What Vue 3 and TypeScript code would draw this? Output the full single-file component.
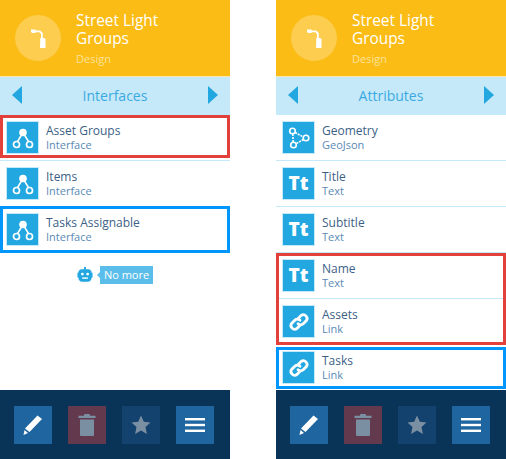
<template>
  <div class="screens">
    <section v-for="screen in screens" :key="screen.title" class="phone">
      <header class="phone__head">
        <div class="phone__avatar">
          <svg width="15" height="19" viewBox="0 0 15 19">
            <path d="M0 .5h4.500v.9h4.600l2.700 2.700v5h-1.800V4.900L8.300 3.300H4.500V4H1.200L0 3z" fill="#fff" />
            <path d="M9.300 9h4.200l1 1.500v8.500H9z" fill="#fff" />
          </svg>
        </div>
        <div class="phone__heading">
          <h1>Street Light<br />Groups</h1>
          <p>Design</p>
        </div>
      </header>

      <nav class="phone__nav">
        <svg width="10" height="18" viewBox="0 0 10 18"><path d="M10 0v18L0 9z" fill="#22a7e0" /></svg>
        <span>{{ screen.title }}</span>
        <svg width="10" height="18" viewBox="0 0 10 18"><path d="M0 0v18l10-9z" fill="#22a7e0" /></svg>
      </nav>

      <div class="phone__list">
        <div
          v-for="(group, i) in screen.groups"
          :key="i"
          class="group"
          :class="group.mark ? `group--${group.mark}` : ''"
        >
          <div v-for="row in group.rows" :key="row.name" class="row">
            <div class="row__icon">
              <span v-if="row.icon === 'text'" class="row__tt">Tt</span>
              <svg v-else-if="row.icon === 'tree'" width="24" height="24" viewBox="0 0 24 24" fill="none" stroke="#fff">
                <circle cx="12" cy="6.500" r="3.800" fill="#fff" stroke="none" />
                <path d="M10.500 9 6.500 15.500M13.500 9l4 6.500" stroke-width="1.500" />
                <circle cx="5.500" cy="18.500" r="3" stroke-width="1.700" />
                <circle cx="18.500" cy="18.500" r="3" stroke-width="1.700" />
              </svg>
              <svg v-else-if="row.icon === 'geo'" width="24" height="24" viewBox="0 0 24 24" fill="none" stroke="#fff" stroke-width="1.600">
                <circle cx="5.500" cy="5" r="2.800" />
                <circle cx="19" cy="12" r="2.800" />
                <circle cx="6.500" cy="19" r="2.800" />
                <path d="M8.200 6.500 16.300 11M16.500 13.500 9 17.700M5.800 8 6.200 16.200" stroke-dasharray="2 1" />
              </svg>
              <svg v-else width="24" height="24" viewBox="0 0 24 24" fill="none" stroke="#fff" stroke-width="2.800" stroke-linecap="round">
                <path d="M11 8.700 14 5.600a3.700 3.700 0 0 1 5.200 5.200l-3 3a3.700 3.700 0 0 1-5.200 0" />
                <path d="M13 15.300 10 18.400a3.700 3.700 0 0 1-5.200-5.200l3-3a3.700 3.700 0 0 1 5.200 0" />
              </svg>
            </div>
            <div class="row__text">
              <strong>{{ row.name }}</strong>
              <small>{{ row.type }}</small>
            </div>
          </div>
        </div>

        <div v-if="screen.noMore" class="no-more">
          <svg width="16" height="17" viewBox="0 0 16 18">
            <path d="M7 0h2v2.500h2.500c2 0 3.500 1.500 3.500 3.500h1v5h-1c0 2.500-1.500 4.500-4 4.500H5C2.500 15.500 1 13.500 1 11H0V6h1c0-2 1.500-3.500 3.500-3.500H7z" fill="#22a7e0" />
            <circle cx="5.200" cy="7.500" r="1.500" fill="#fff" />
            <circle cx="10.800" cy="7.500" r="1.500" fill="#fff" />
            <rect x="5" y="11" width="6" height="1.500" fill="#fff" />
          </svg>
          <span class="no-more__tag">No more</span>
        </div>
      </div>

      <footer class="phone__bar">
        <button class="tool">
          <svg width="22" height="22" viewBox="0 0 22 22">
            <path d="M15.500 1.500 20 5 7.500 18l-4.500-3.500z" fill="#fff" />
            <path d="M2.500 16 6 19l-4.500 2z" fill="#fff" />
          </svg>
        </button>
        <button class="tool tool--danger">
          <svg width="18" height="22" viewBox="0 0 18 22" fill="#7b8fa3">
            <path d="M6.500 0h5l.7 1.800H17.500V4H.5V1.800h5.300z" />
            <path d="M2 5.500h14V21a1 1 0 0 1-1 1H3a1 1 0 0 1-1-1z" />
          </svg>
        </button>
        <button class="tool tool--muted">
          <svg width="20" height="20" viewBox="0 0 20 20"><path d="M10 .5l2.800 6.300 6.700.7-5 4.600 1.400 6.800L10 15.400l-5.900 3.500 1.400-6.800-5-4.600 6.700-.7z" fill="#7b8fa3" /></svg>
        </button>
        <button class="tool">
          <svg width="20" height="14" viewBox="0 0 20 14" fill="#fff">
            <rect width="20" height="2.400" />
            <rect y="5.800" width="20" height="2.400" />
            <rect y="11.600" width="20" height="2.400" />
          </svg>
        </button>
      </footer>
    </section>
  </div>
</template>

<script setup lang="ts">
type Row = { name: string; type: string; icon: 'tree' | 'geo' | 'text' | 'link' };
type Group = { mark?: 'red' | 'blue'; rows: Row[] };

const screens: { title: string; noMore: boolean; groups: Group[] }[] = [
  {
    title: 'Interfaces',
    noMore: true,
    groups: [
      { mark: 'red', rows: [{ name: 'Asset Groups', type: 'Interface', icon: 'tree' }] },
      { rows: [{ name: 'Items', type: 'Interface', icon: 'tree' }] },
      { mark: 'blue', rows: [{ name: 'Tasks Assignable', type: 'Interface', icon: 'tree' }] }
    ]
  },
  {
    title: 'Attributes',
    noMore: false,
    groups: [
      {
        rows: [
          { name: 'Geometry', type: 'GeoJson', icon: 'geo' },
          { name: 'Title', type: 'Text', icon: 'text' },
          { name: 'Subtitle', type: 'Text', icon: 'text' }
        ]
      },
      {
        mark: 'red',
        rows: [
          { name: 'Name', type: 'Text', icon: 'text' },
          { name: 'Assets', type: 'Link', icon: 'link' }
        ]
      },
      { mark: 'blue', rows: [{ name: 'Tasks', type: 'Link', icon: 'link' }] }
    ]
  }
];
</script>

<style scoped>
.screens {
  display: flex;
  justify-content: space-between;
  width: 506px;
  height: 459px;
  overflow: hidden;
  font-family: "Open Sans", "Liberation Sans", sans-serif;
}

.phone {
  width: 230px;
  height: 459px;
  display: flex;
  flex-direction: column;
}

.phone__head {
  height: 76px;
  flex: none;
  display: flex;
  align-items: center;
  gap: 15px;
  padding-left: 15px;
  background: #fbbc15;
  box-sizing: border-box;
}

.phone__avatar {
  width: 46px;
  height: 46px;
  border-radius: 50%;
  background: #fccd4f;
  display: flex;
  align-items: center;
  justify-content: center;
}

.phone__heading {
  align-self: flex-start;
  padding-top: 12px;
}

.phone__heading h1 {
  margin: 0;
  font-size: 15.4px;
  line-height: 18px;
  font-weight: 400;
  color: #fff;
}

.phone__heading p {
  margin: 3px 0 0;
  font-size: 11px;
  line-height: 15px;
  color: #fde29b;
}

.phone__nav {
  height: 39px;
  flex: none;
  display: flex;
  align-items: center;
  justify-content: space-between;
  padding: 0 12px 2px 12px;
  box-sizing: border-box;
  background: #c5e9f9;
  border-top: 1px solid #fbe8b0;
  font-size: 14px;
  color: #3aa9e2;
}

.phone__list {
  flex: 1;
  min-height: 0;
  background: #fff;
}

.group {
  position: relative;
}

.group--red::after,
.group--blue::after {
  content: "";
  position: absolute;
  inset: 0;
  border: 3px solid #e2403b;
  pointer-events: none;
}

.group--blue::after {
  border-color: #0096fb;
}

.phone:first-child .group--red::after {
  bottom: 3px;
}

.phone:first-child .group--blue::after {
  top: -1px;
}

.phone:last-child .group--blue::after {
  top: 2px;
  bottom: 2px;
}

.row {
  height: 46px;
  display: flex;
  align-items: center;
  gap: 8px;
  padding-left: 7px;
  box-sizing: border-box;
  border-bottom: 1px solid #c5e9f9;
}

.row__icon {
  width: 31px;
  height: 31px;
  background: #22a7e0;
  box-shadow: 0 0 0 1px #c5e9f9;
  display: flex;
  align-items: center;
  justify-content: center;
}

.row__tt {
  font-family: "Open Sans", "DejaVu Sans", sans-serif;
  font-size: 19px;
  line-height: 1;
  font-weight: 800;
  color: #fff;
}

.row__text {
  display: flex;
  flex-direction: column;
}

.row__text strong {
  font-size: 12px;
  line-height: 15px;
  font-weight: 400;
  color: #3c5f86;
}

.row__text small {
  font-size: 11px;
  line-height: 14px;
  color: #5a8ab5;
}

.no-more {
  display: flex;
  align-items: center;
  justify-content: center;
  gap: 7px;
  padding-top: 13px;
}

.no-more__tag {
  position: relative;
  background: #5bbde9;
  color: #fff;
  font-size: 11px;
  line-height: 18px;
  padding: 0 4px;
}

.no-more__tag::before {
  content: "";
  position: absolute;
  left: -3px;
  top: 6px;
  border-style: solid;
  border-width: 3px 3px 3px 0;
  border-color: transparent #5bbde9 transparent transparent;
}

.phone__bar {
  position: relative;
  height: 69px;
  flex: none;
  display: flex;
  align-items: center;
  gap: 16px;
  padding-left: 14px;
  box-sizing: border-box;
  background: #0a3358;
}

.tool {
  width: 38px;
  height: 38px;
  padding: 0;
  border: 0;
  background: #1f659f;
  display: flex;
  align-items: center;
  justify-content: center;
}

.tool--danger {
  background: #633a4d;
}

.tool--muted {
  background: #13426e;
}
</style>

<style>
body {
  background: #fff;
}
</style>
